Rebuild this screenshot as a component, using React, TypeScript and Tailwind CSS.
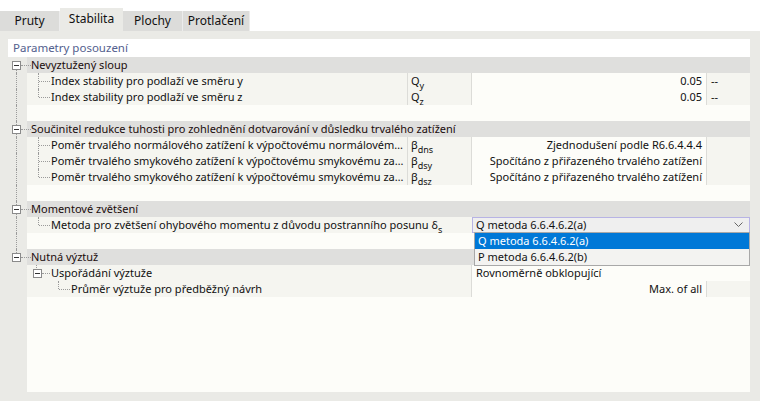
import React from 'react'

type Item = {
  name: string
  sym?: React.ReactNode
  value?: string
  unit?: string
}

const font = { fontFamily: '"Noto Sans", "Liberation Sans", sans-serif' }

const Sym = ({ base, sub }: { base: string; sub: string }) => (
  <span>
    {base}
    <sub className="text-[9px] align-[-2px] leading-none">{sub}</sub>
  </span>
)

const tabs = ['Pruty', 'Stabilita', 'Plochy', 'Protlačení']

function Gutter({ up, down, box }: { up?: boolean; down?: boolean; box?: boolean }) {
  return (
    <div className="relative w-[19px] h-4 shrink-0 bg-[#eaeae6]">
      {up && <div className={`absolute left-[8px] top-0 border-l border-dotted border-[#9a9a9a] ${box ? 'h-[4px]' : 'h-4'}`} />}
      {down && <div className={`absolute left-[8px] bottom-0 border-l border-dotted border-[#9a9a9a] ${box ? 'h-[3px]' : 'h-4'}`} />}
      {box && (
        <div className="absolute left-[4px] top-[4px] w-[9px] h-[9px] border border-[#8a8a8a] bg-white flex items-center justify-center">
          <div className="w-[5px] h-px bg-[#333]" />
        </div>
      )}
      {box && <div className="absolute left-[13px] top-[8px] w-[10px] border-t border-dotted border-[#9a9a9a]" />}
    </div>
  )
}

function Connector({ last, indent = 0 }: { last: boolean; indent?: number }) {
  return (
    <div className="relative h-4 shrink-0" style={{ width: 24 + indent }}>
      <div
        className={`absolute top-0 border-l border-dotted border-[#9a9a9a] ${last ? 'h-[8px]' : 'h-4'}`}
        style={{ left: 11 + indent }}
      />
      <div className="absolute top-[8px] w-[11px] border-t border-dotted border-[#9a9a9a]" style={{ left: 12 + indent }} />
    </div>
  )
}

function GroupRow({ title, up, down }: { title: string; up?: boolean; down?: boolean }) {
  return (
    <div className="flex h-4">
      <Gutter up={up} down={down} box />
      <div className="flex-1 bg-[#dfdfdd] pl-[4px] leading-4 text-[#1a0c0c]">{title}</div>
    </div>
  )
}

function ItemRow({ item, last, line }: { item: Item; last: boolean; line: boolean }) {
  return (
    <div className="flex h-4 leading-4">
      <Gutter up={line} down={line} />
      <div className="flex w-[381px] bg-[#f5f5f0] border-r border-[#dcdcd8] overflow-hidden">
        <Connector last={last} />
        <span className="truncate pr-[3px]">{item.name}</span>
      </div>
      <div className="w-[64px] bg-[#f5f5f0] border-r border-[#dcdcd8] pl-[3px] whitespace-nowrap">{item.sym}</div>
      <div className="w-[235px] text-right pr-[4px] border-r border-[#dcdcd8] whitespace-nowrap">{item.value}</div>
      <div className="flex-1 bg-[#f5f5f0] pl-[4px]">{item.unit}</div>
    </div>
  )
}

function Gap({ line }: { line: boolean }) {
  return (
    <div className="flex h-4">
      <Gutter up={line} down={line} />
      <div className="flex-1" />
    </div>
  )
}

export default function App() {
  const g1: Item[] = [
    { name: 'Index stability pro podlaží ve směru y', sym: <Sym base="Q" sub="y" />, value: '0.05', unit: '--' },
    { name: 'Index stability pro podlaží ve směru z', sym: <Sym base="Q" sub="z" />, value: '0.05', unit: '--' },
  ]
  const g2: Item[] = [
    { name: 'Poměr trvalého normálového zatížení k výpočtovému normálovému zatížení', sym: <Sym base="β" sub="dns" />, value: 'Zjednodušení podle R6.6.4.4.4' },
    { name: 'Poměr trvalého smykového zatížení k výpočtovému smykovému zatížení', sym: <Sym base="β" sub="dsy" />, value: 'Spočítáno z přiřazeného trvalého zatížení' },
    { name: 'Poměr trvalého smykového zatížení k výpočtovému smykovému zatížení', sym: <Sym base="β" sub="dsz" />, value: 'Spočítáno z přiřazeného trvalého zatížení' },
  ]

  return (
    <div className="w-[760px] h-[401px] bg-white text-[11px] text-[#111] overflow-hidden flex flex-col" style={font}>
      <div className="flex h-[31px] pt-[8px] items-end shrink-0 text-[12px]">
        {tabs.map((t, i) => (
          <div
            key={t}
            className={
              i === 1
                ? 'h-[23px] w-[63px] bg-[#eaeae6] flex items-center justify-center pb-[1px]'
                : `h-[20px] bg-[#dcdcda] flex items-center justify-center border-r border-[#ececec] ${i === 0 ? 'w-[60px]' : i === 2 ? 'w-[60px]' : 'w-[67px]'}`
            }
          >
            {t}
          </div>
        ))}
      </div>

      <div className="flex-1 bg-[#eaeae6] pt-[8px] pl-[8px] pr-[10px] pb-[9px] flex">
        <div className="flex-1 bg-[#fdfdf9] flex flex-col">
          <div className="h-[18px] leading-[18px] pl-[5px] text-[#53608e] text-[11.5px] bg-white shrink-0">Parametry posouzení</div>

          <GroupRow title="Nevyztužený sloup" down />
          {g1.map((it, i) => (
            <ItemRow key={i} item={it} last={i === g1.length - 1} line />
          ))}
          <Gap line />

          <GroupRow title="Součinitel redukce tuhosti pro zohlednění dotvarování v důsledku trvalého zatížení" up down />
          {g2.map((it, i) => (
            <ItemRow key={i} item={it} last={i === g2.length - 1} line />
          ))}
          <Gap line />

          <GroupRow title="Momentové zvětšení" up down />
          <div className="flex h-4 leading-4 relative">
            <Gutter up down />
            <div className="flex w-[445px] bg-[#f5f5f0] whitespace-nowrap">
              <Connector last />
              <span>
                Metoda pro zvětšení ohybového momentu z důvodu postranního posunu δ
                <sub className="text-[9px] align-[-2px] leading-none">s</sub>
              </span>
            </div>
            <div className="flex-1 relative">
              <div className="h-4 border border-[#b7b3e4] bg-[#efefef] flex items-center justify-between pl-[3px] pr-[6px]">
                <span>Q metoda 6.6.4.6.2(a)</span>
                <svg width="9" height="6" viewBox="0 0 9 6" fill="none">
                  <path d="M0.5 0.5 L4.5 4.5 L8.5 0.5" stroke="#666" strokeWidth="1" />
                </svg>
              </div>
              <div className="absolute left-[2px] right-0 top-[15px] z-10 border border-[#a8a8a8] bg-[#f3f3f1]">
                <div className="h-4 leading-4 bg-[#0078d7] text-white pl-[3px]">Q metoda 6.6.4.6.2(a)</div>
                <div className="h-4 leading-4 pl-[3px]">P metoda 6.6.4.6.2(b)</div>
              </div>
            </div>
          </div>
          <Gap line />

          <GroupRow title="Nutná výztuž" up />
          <div className="flex h-4 leading-4">
            <Gutter />
            <div className="flex w-[445px] bg-[#f5f5f0] border-r border-[#dcdcd8] relative">
              <div className="absolute left-[9px] top-0 h-[3px] border-l border-dotted border-[#9a9a9a]" />
              <div className="relative w-[24px] h-4 shrink-0">
                <div className="absolute left-[6px] top-[4px] w-[9px] h-[9px] border border-[#8a8a8a] bg-white flex items-center justify-center">
                  <div className="w-[5px] h-px bg-[#333]" />
                </div>
                <div className="absolute left-[15px] top-[8px] w-[8px] border-t border-dotted border-[#9a9a9a]" />
              </div>
              <span>Uspořádání výztuže</span>
            </div>
            <div className="flex-1 pl-[4px]">Rovnoměrně obklopující</div>
          </div>
          <div className="flex h-4 leading-4">
            <Gutter />
            <div className="flex w-[445px] bg-[#f5f5f0] border-r border-[#dcdcd8]">
              <Connector last indent={20} />
              <span>Průměr výztuže pro předběžný návrh</span>
            </div>
            <div className="w-[235px] text-right pr-[4px] border-r border-[#dcdcd8]">Max. of all</div>
            <div className="flex-1 bg-[#f5f5f0]" />
          </div>

          <div className="flex-1 flex">
            <div className="w-[19px] bg-[#eaeae6]" />
            <div className="flex-1" />
          </div>
        </div>
      </div>
    </div>
  )
}
